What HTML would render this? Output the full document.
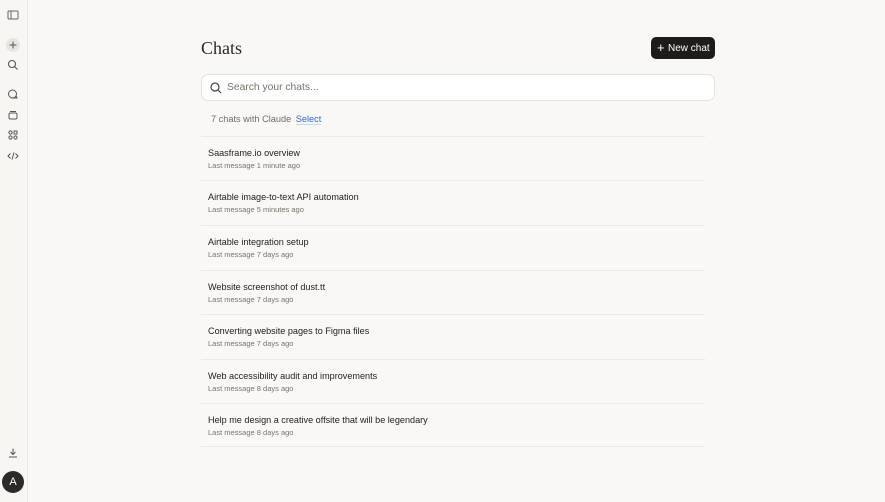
<!DOCTYPE html>
<html><head><style>
*{margin:0;padding:0;box-sizing:border-box}
body{width:885px;height:502px;background:#faf8f6;font-family:"Liberation Sans",sans-serif;position:relative;overflow:hidden;color:#222}
.side{position:absolute;left:0;top:0;width:28px;height:502px;border-right:1px solid #ece9e4;background:#f8f6f3}
.ic{position:absolute;left:6px;width:14px;height:14px}
h1{position:absolute;left:201px;top:38px;font-family:"Liberation Serif",serif;font-weight:normal;font-size:18px;color:#2a2a28}
.btn{position:absolute;left:651px;top:37px;width:64px;height:22px;background:#1d1c1a;border-radius:5px;color:#fff;font-size:10px;display:flex;align-items:center;padding-left:17px}
.btn span{position:absolute;left:6px;top:3px;font-size:13px;line-height:15px}
.search{position:absolute;left:201px;top:74px;width:514px;height:27px;background:#fff;border:1px solid #e6e3de;border-radius:7px;font-size:10.3px;color:#77736c;line-height:26px;padding-left:25px}
.count{position:absolute;left:211px;top:114px;font-size:9.2px;color:#6f6b65}
.count b{font-weight:normal;color:#2f6bd1;margin-left:2px;border-bottom:1px solid #c9d8f2}
.row{position:absolute;left:201px;width:504px;height:44px;border-top:1px solid #ece9e4}
.row .t{position:absolute;left:7px;top:11px;font-size:9.1px;color:#222}
.row .s{position:absolute;left:7px;top:24px;font-size:7.5px;color:#77736c}
.av{position:absolute;left:2px;top:471px;width:22px;height:22px;border-radius:50%;background:#2b2a28;color:#fff;font-size:11px;text-align:center;line-height:22px}
</style></head><body>
<div class="side">
<svg class="ic" style="top:8px" viewBox="0 0 14 14" fill="none" stroke="#666" stroke-width="1"><rect x="2" y="3" width="10" height="8" rx="1"/><line x1="5" y1="3" x2="5" y2="11"/></svg>
<div style="position:absolute;left:6px;top:38px;width:14px;height:14px;border-radius:50%;background:#e8e5e0"></div>
<svg class="ic" style="top:38px" viewBox="0 0 14 14" stroke="#555" stroke-width="1"><line x1="7" y1="3.5" x2="7" y2="10.5"/><line x1="3.5" y1="7" x2="10.5" y2="7"/></svg>
<svg class="ic" style="top:58px" viewBox="0 0 14 14" fill="none" stroke="#555" stroke-width="1.1"><circle cx="6" cy="6" r="3.5"/><line x1="8.5" y1="8.5" x2="11.5" y2="11.5"/></svg>
<svg class="ic" style="top:88px" viewBox="0 0 14 14" fill="none" stroke="#555" stroke-width="1"><circle cx="6.5" cy="6" r="4"/><path d="M5 10h6l-1-2"/></svg>
<svg class="ic" style="top:108px" viewBox="0 0 14 14" fill="none" stroke="#555" stroke-width="1"><rect x="3" y="5" width="8" height="6" rx="1.5"/><line x1="4" y1="3.5" x2="10" y2="3.5"/></svg>
<svg class="ic" style="top:128px" viewBox="0 0 14 14" fill="none" stroke="#555" stroke-width="1"><circle cx="4.5" cy="4.5" r="1.6"/><rect x="8" y="3" width="3" height="3"/><circle cx="4.5" cy="9.5" r="1.6"/><circle cx="9.5" cy="9.5" r="1.6"/></svg>
<svg class="ic" style="top:149px" viewBox="0 0 14 14" fill="none" stroke="#555" stroke-width="1"><path d="M4.5 4.5L2 7l2.5 2.5M9.5 4.5L12 7 9.5 9.5M8 3.5l-2 7"/></svg>
<svg class="ic" style="top:446px" viewBox="0 0 14 14" fill="none" stroke="#555" stroke-width="1"><path d="M7 2.5v6M4.5 6L7 8.5 9.5 6M3 11h8"/></svg>
<div class="av">A</div>
</div>
<h1>Chats</h1>
<div class="btn"><span>+</span>New chat</div>
<div class="search">Search your chats...
<svg style="position:absolute;left:7px;top:6px" width="14" height="14" viewBox="0 0 14 14" fill="none" stroke="#444" stroke-width="1.2"><circle cx="6" cy="6" r="4"/><line x1="9" y1="9" x2="12" y2="12"/></svg></div>
<div class="count">7 chats with Claude <b>Select</b></div>
<div class="row" style="top:136px"><div class="t">Saasframe.io overview</div><div class="s">Last message 1 minute ago</div></div>
<div class="row" style="top:180px"><div class="t">Airtable image-to-text API automation</div><div class="s">Last message 5 minutes ago</div></div>
<div class="row" style="top:225px"><div class="t">Airtable integration setup</div><div class="s">Last message 7 days ago</div></div>
<div class="row" style="top:270px"><div class="t">Website screenshot of dust.tt</div><div class="s">Last message 7 days ago</div></div>
<div class="row" style="top:314px"><div class="t">Converting website pages to Figma files</div><div class="s">Last message 7 days ago</div></div>
<div class="row" style="top:359px"><div class="t">Web accessibility audit and improvements</div><div class="s">Last message 8 days ago</div></div>
<div class="row" style="top:403px;border-bottom:1px solid #ece9e4"><div class="t">Help me design a creative offsite that will be legendary</div><div class="s">Last message 8 days ago</div></div>
</body></html>
